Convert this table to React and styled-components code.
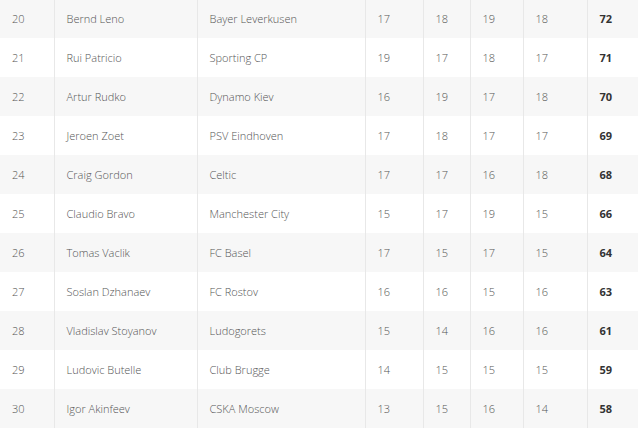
import React from "react";
import styled, { createGlobalStyle } from "styled-components";

const Global = createGlobalStyle`
  html, body { margin: 0; padding: 0; background: #fff; }
  body { font-family: "Open Sans", "Liberation Sans", sans-serif; overflow: hidden; }
`;

const Table = styled.table`
  width: 638px;
  margin-top: -1px;
  border-collapse: collapse;
  table-layout: fixed;
  font-size: 11px;
  color: #555;
`;

const Row = styled.tr`
  height: 39px;
  background: ${(p) => (p.$striped ? "#f7f7f7" : "#fff")};
`;

const Cell = styled.td`
  padding: 0 0 0 12px;
  vertical-align: middle;
  white-space: nowrap;
  border-left: ${(p) => (p.$first ? "none" : "1px solid #e8e8e8")};
  font-weight: ${(p) => (p.$bold ? 700 : 300)};
  color: ${(p) => (p.$bold ? "#333" : "#555")};
`;

const widths = [54, 143, 168, 58, 47, 53, 64, 51];

const rows = [
  [20, "Bernd Leno", "Bayer Leverkusen", 17, 18, 19, 18, 72],
  [21, "Rui Patricio", "Sporting CP", 19, 17, 18, 17, 71],
  [22, "Artur Rudko", "Dynamo Kiev", 16, 19, 17, 18, 70],
  [23, "Jeroen Zoet", "PSV Eindhoven", 17, 18, 17, 17, 69],
  [24, "Craig Gordon", "Celtic", 17, 17, 16, 18, 68],
  [25, "Claudio Bravo", "Manchester City", 15, 17, 19, 15, 66],
  [26, "Tomas Vaclik", "FC Basel", 17, 15, 17, 15, 64],
  [27, "Soslan Dzhanaev", "FC Rostov", 16, 16, 15, 16, 63],
  [28, "Vladislav Stoyanov", "Ludogorets", 15, 14, 16, 16, 61],
  [29, "Ludovic Butelle", "Club Brugge", 14, 15, 15, 15, 59],
  [30, "Igor Akinfeev", "CSKA Moscow", 13, 15, 16, 14, 58],
];

export default function App() {
  return (
    <>
      <Global />
      <Table>
        <colgroup>
          {widths.map((w, i) => (
            <col key={i} style={{ width: w }} />
          ))}
        </colgroup>
        <tbody>
          {rows.map((r, i) => (
            <Row key={r[0]} $striped={i % 2 === 0}>
              {r.map((v, j) => (
                <Cell key={j} $first={j === 0} $bold={j === 7}>
                  {v}
                </Cell>
              ))}
            </Row>
          ))}
        </tbody>
      </Table>
    </>
  );
}
